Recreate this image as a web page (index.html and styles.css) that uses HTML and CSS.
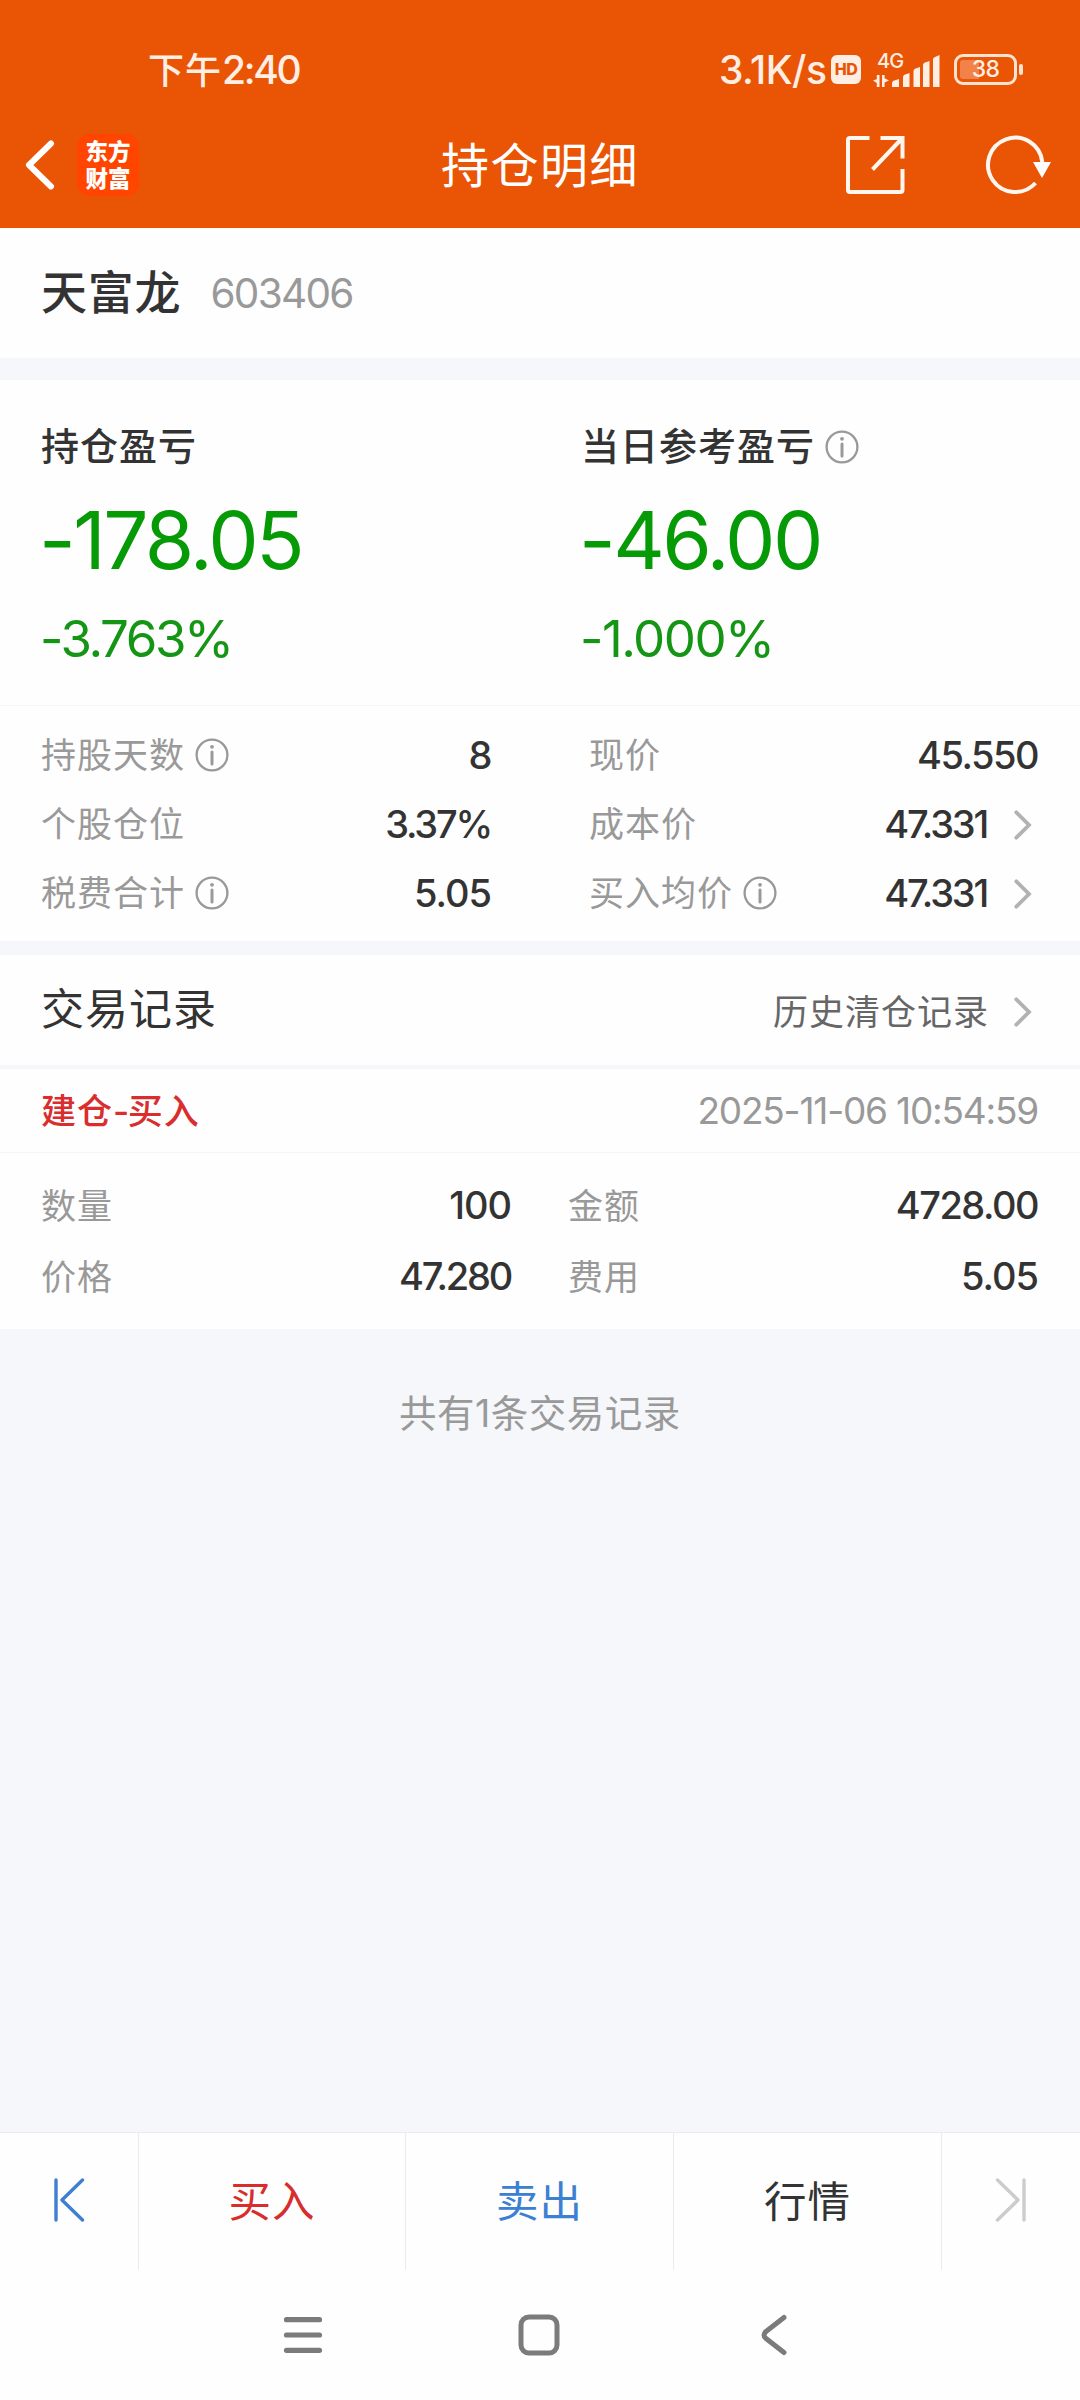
FILE: index.html
```html
<!DOCTYPE html>
<html lang="zh-CN">
<head>
<meta charset="utf-8">
<title>持仓明细</title>
<link rel="stylesheet" href="styles.css">
</head>
<body>
<svg class="defs" aria-hidden="true">
  <symbol id="info" viewBox="0 0 34 34">
    <circle cx="17" cy="17" r="15.4" fill="none" stroke="#999" stroke-width="2.3"/>
    <circle cx="17" cy="8.8" r="1.9" fill="#999"/>
    <path d="M17 14v12" stroke="#999" stroke-width="3" stroke-linecap="round"/>
  </symbol>
  <symbol id="more" viewBox="0 0 18 30">
    <path d="M2.3 2.3 15 15 2.3 27.7" fill="none" stroke="#b2b2b2" stroke-width="3.8" stroke-linecap="round"/>
  </symbol>
</svg>

<header class="top">
  <div class="status">
    <span class="clock">下午<span class="clock-digits">2:40</span></span>
    <div class="indicators">
      <span class="speed">3.1K/s</span>
      <span class="hd">HD</span>
      <div class="signal">
        <div class="signal-net">
          <span class="net">4G</span>
          <svg width="17" height="12" viewBox="0 0 17 12"><path d="M3.800 0h2.700v12H3.800V8L0 5.500 3.800 4.200zM9 0h2.600v3.200L16 5.500 11.600 7.500V12H9z" fill="#ffeee4"/></svg>
        </div>
        <svg class="bars" width="48" height="32" viewBox="0 0 48 32"><path d="M0 32v-4q0-1.500 1.500-2.200L7 24v8zM11 32V22q0-1.500 1.500-2.200L17.500 18v14zM21.500 32V16q0-1.500 1.500-2.200L28 12v20zM31 32V10q0-1.500 1.500-2.200L37.500 6v26zM41 32V4.500q0-1.500 1.500-2.300L47.500 0v32z" fill="#ffeee4"/></svg>
      </div>
      <div class="battery"><span class="level">38</span></div>
    </div>
  </div>
  <div class="titlebar">
    <div class="left">
      <svg width="31" height="50" viewBox="0 0 31 50"><path d="M27 3.500 5 25l22 21.500" fill="none" stroke="#fff" stroke-width="6" stroke-linecap="round" stroke-linejoin="round"/></svg>
      <div class="logo"><span>东方</span><span>财富</span></div>
    </div>
    <h1>持仓明细</h1>
    <div class="right">
      <svg width="60" height="60" viewBox="0 0 60 60" fill="none" stroke="#fff6ef" stroke-width="4"><path d="M24.500 3H5Q3 3 3 5v50q0 2 2 2h50.500q2 0 2-2V34M35.500 3h22v20.500M57 3.500 27.500 34.500"/></svg>
      <svg width="66" height="60" viewBox="0 0 66 60"><path d="M57.300 27A27.200 27.200 0 1 0 50.500 48" fill="none" stroke="#fff6ef" stroke-width="4"/><path d="M48 27h18l-9 16z" fill="#fff"/></svg>
    </div>
  </div>
</header>

<main>
  <section class="stock">
    <span class="name">天富龙</span><span class="code">603406</span>
  </section>

  <section class="profit">
    <div class="col">
      <div class="label">持仓盈亏</div>
      <div class="amount">-178.05</div>
      <div class="percent">-3.763%</div>
    </div>
    <div class="col">
      <div class="label">当日参考盈亏<svg class="info"><use href="#info"/></svg></div>
      <div class="amount">-46.00</div>
      <div class="percent wide">-1.000%</div>
    </div>
  </section>

  <section class="details">
    <dl>
      <div class="row"><dt>持股天数<svg class="info"><use href="#info"/></svg></dt><dd>8</dd></div>
      <div class="row"><dt>个股仓位</dt><dd class="tight">3.37%</dd></div>
      <div class="row"><dt>税费合计<svg class="info"><use href="#info"/></svg></dt><dd class="loose">5.05</dd></div>
    </dl>
    <dl>
      <div class="row"><dt>现价</dt><dd>45.550</dd></div>
      <div class="row"><dt>成本价</dt><dd class="tight">47.331<svg class="more"><use href="#more"/></svg></dd></div>
      <div class="row"><dt>买入均价<svg class="info"><use href="#info"/></svg></dt><dd class="tight">47.331<svg class="more"><use href="#more"/></svg></dd></div>
    </dl>
  </section>

  <section class="records">
    <div class="records-head">
      <h2>交易记录</h2>
      <span class="history">历史清仓记录<svg class="more"><use href="#more"/></svg></span>
    </div>
    <div class="record-title">
      <span class="kind">建仓<span class="dash">-</span>买入</span><span class="time">2025-11-06 10:54:59</span>
    </div>
    <div class="record-body">
      <dl>
        <div class="row"><dt>数量</dt><dd class="loose">100</dd></div>
        <div class="row"><dt>价格</dt><dd class="tight">47.280</dd></div>
      </dl>
      <dl>
        <div class="row"><dt>金额</dt><dd>4728.00</dd></div>
        <div class="row"><dt>费用</dt><dd class="loose">5.05</dd></div>
      </dl>
    </div>
  </section>
  <p class="count">共有1条交易记录</p>
</main>

<footer>
  <div class="actions">
    <div class="action"><svg width="32" height="44" viewBox="0 0 32 44" fill="none" stroke="#3f7fcf" stroke-width="3.400" stroke-linecap="round" stroke-linejoin="round"><path d="M3 2v40M29.500 2 9 22l20.500 20"/></svg></div>
    <div class="action buy">买入</div>
    <div class="action sell">卖出</div>
    <div class="action">行情</div>
    <div class="action"><svg width="32" height="44" viewBox="0 0 32 44" fill="none" stroke="#ccc" stroke-width="3.400" stroke-linecap="round" stroke-linejoin="round"><path d="M29 2v40M2.500 2 23 22 2.500 42"/></svg></div>
  </div>
  <nav>
    <svg width="40" height="42" viewBox="0 0 40 42"><path d="M3.500 5.700h33M3.500 21h33M3.500 36.300h33" stroke="#7b7b7b" stroke-width="5.200" stroke-linecap="round"/></svg>
    <svg width="42" height="42" viewBox="0 0 42 42"><rect x="3" y="3" width="36" height="36" rx="8" fill="none" stroke="#7b7b7b" stroke-width="5"/></svg>
    <svg width="28" height="42" viewBox="0 0 28 42"><path d="M24 3.500 6 17.500q-4 3.500 0 7L24 38.500" fill="none" stroke="#7b7b7b" stroke-width="5" stroke-linecap="round"/></svg>
  </nav>
</footer>
</body>
</html>
```
FILE: styles.css
```css
* { box-sizing: border-box; margin: 0; padding: 0; }

body {
  width: 1080px;
  height: 2400px;
  display: flex;
  flex-direction: column;
  background: #f6f7fa;
  color: #333;
  font-family: Inter, "Noto Sans CJK SC", sans-serif;
  font-size: 35px;
  line-height: 1.2;
}

svg { display: block; flex: none; }
.defs { position: absolute; width: 0; height: 0; }

/* Header */
.top { height: 228px; background: #e95504; color: #fff; }
.status {
  height: 104px;
  padding: 36px 57px 0 148px;
  display: flex;
  justify-content: space-between;
  align-items: center;
  color: #ffeee4;
}
.clock { font-size: 36px; font-weight: 500; letter-spacing: 1px; }
.clock-digits { font-size: 39px; letter-spacing: -2.300px; }
.indicators { display: flex; align-items: center; }
.speed { font-size: 39px; font-weight: 500; letter-spacing: -0.500px; width: 112px; white-space: nowrap; }
.hd {
  width: 30px; height: 29px;
  border-radius: 6px;
  background: #ffeee4;
  color: #e95504;
  font-size: 16px; font-weight: 800; line-height: 29px;
  text-align: center;
  letter-spacing: -0.5px;
}
.signal { display: flex; align-items: flex-end; margin-left: 12px; height: 34px; width: 67px; }
.signal-net { width: 19px; height: 34px; display: flex; flex-direction: column; justify-content: space-between; }
.net { font-size: 20px; font-weight: 500; line-height: 17px; letter-spacing: -1px; padding-left: 4px; }
.battery {
  position: relative;
  width: 63px; height: 31px;
  margin: 0 6px 0 14px;
  border: 3px solid #ffe3d0;
  border-radius: 9px;
  display: flex;
}
.battery::after {
  content: "";
  position: absolute;
  left: 62px; top: 7px;
  width: 4px; height: 11px;
  border-radius: 2px;
  background: #ffe3d0;
}
.level {
  flex: 1;
  margin: 3px;
  border-radius: 3px;
  background: linear-gradient(to right, #f2824a 19px, transparent 19px);
  font-size: 23px; font-weight: 500; line-height: 19px;
  letter-spacing: -0.800px;
  text-align: center;
}
.titlebar {
  height: 122px;
  padding: 0 29px 0 24px;
  display: grid;
  grid-template-columns: 1fr auto 1fr;
  align-items: center;
}
.titlebar h1 { font-size: 48px; font-weight: 400; letter-spacing: 1.500px; padding: 2px 0 0 5px; }
.left { display: flex; align-items: center; gap: 22px; }
.logo {
  width: 62px; height: 62px;
  border-radius: 13px;
  background: #ff4500;
  display: flex; flex-direction: column; align-items: center; justify-content: center;
  font-size: 22.500px; font-weight: 900; line-height: 27px;
}
.right { display: flex; justify-content: flex-end; gap: 80px; }

/* Stock */
.stock {
  height: 130px;
  padding: 0 41px;
  display: flex;
  align-items: center;
  gap: 29px;
  background: #fefefe;
}
.name { font-size: 46px; font-weight: 500; letter-spacing: 0.800px; }
.code { font-size: 40.500px; color: #999; letter-spacing: -1.700px; padding-top: 2px; }

/* Profit and loss */
.profit {
  height: 325px;
  margin-top: 22px;
  padding: 36px 41px 0;
  display: grid;
  grid-template-columns: 540px 1fr;
  background: #fefefe;
}
.label { height: 62px; display: flex; align-items: center; font-size: 38px; font-weight: 500; letter-spacing: 1px; }
.amount { height: 124px; margin-left: -2px; line-height: 124px; font-size: 80px; letter-spacing: -2.600px; color: #069b06; }
.percent { height: 74px; margin-left: -1px; line-height: 74px; font-size: 51px; letter-spacing: -2.400px; color: #149514; }
.percent.wide { letter-spacing: -1.500px; }
.info { width: 34px; height: 34px; margin-left: 10px; }

/* Figures */
.details {
  height: 236px;
  padding: 15px 42px 0 41px;
  border-top: 1px solid #f4f5f6;
  display: grid;
  grid-template-columns: 450px 449px;
  column-gap: 98px;
  background: #fefefe;
}
.row { height: 69px; display: flex; justify-content: space-between; align-items: center; }
.row dt { display: flex; align-items: center; color: #999; letter-spacing: 1px; }
.details dt { padding-bottom: 2px; }
.row dd { display: flex; align-items: center; font-size: 38px; font-weight: 500; letter-spacing: -1.500px; }
.row dd.tight { letter-spacing: -2.200px; }
.row dd.loose { letter-spacing: -1px; }
.more { width: 18px; height: 30px; margin: 0 6px 0 27px; }

/* Trade records */
.records { margin-top: 14px; background: #fefefe; }
.records-head {
  height: 114px;
  padding: 0 42px 0 41px;
  display: flex; justify-content: space-between; align-items: center;
  border-bottom: 4px solid #f6f7fa;
}
.records-head h2 { font-size: 43px; font-weight: 400; letter-spacing: 1px; }
.history { display: flex; align-items: center; color: #666; letter-spacing: 1px; padding-top: 4px; }
.history .more { margin-left: 25px; }
.record-title {
  height: 84px;
  padding: 0 42px 0 41px;
  display: flex; justify-content: space-between; align-items: center;
  border-bottom: 1px solid #f4f5f6;
}
.kind { color: #da2d2d; font-weight: 500; letter-spacing: 1px; }
.dash { letter-spacing: -1.500px; }
.time { color: #999; font-size: 37px; letter-spacing: -1.200px; padding-top: 2px; }
.record-body {
  height: 176px;
  padding: 17px 42px 0 41px;
  display: grid;
  grid-template-columns: 470px 470px;
  column-gap: 57px;
}
.record-body .row { height: 71px; }
.count { margin-top: 62px; text-align: center; color: #999; font-size: 37.500px; letter-spacing: 0.500px; }

/* Bottom */
main { flex: 1; }
footer { background: #fefefe; border-top: 1px solid #ebebeb; }
.actions { height: 137px; display: grid; grid-template-columns: 139px 267px 268px 268px 138px; }
.action {
  display: flex; align-items: center; justify-content: center;
  font-size: 42.500px; letter-spacing: 1px;
  border-right: 1px solid #ebebeb;
}
.action:last-child { border-right: 0; }
.action svg { margin-bottom: 4px; }
.buy { color: #d92c2c; }
.sell { color: #3b80d2; }
nav { height: 130px; padding-left: 283px; display: grid; grid-template-columns: 235px 242px 28px; align-items: center; }
```
